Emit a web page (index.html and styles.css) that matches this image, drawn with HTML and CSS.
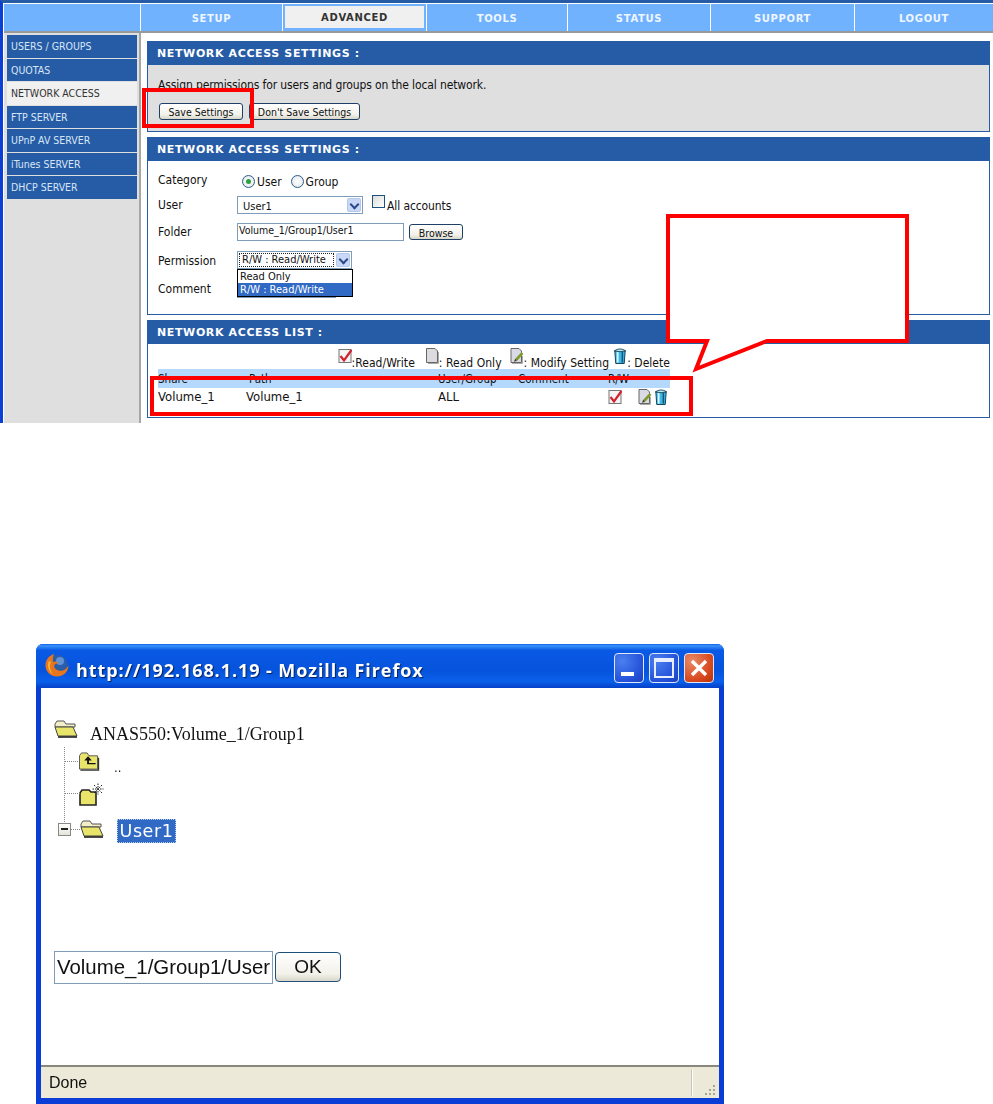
FILE: index.html
```html
<!DOCTYPE html>
<html lang="en">
<head>
<meta charset="utf-8">
<title>Network Access</title>
<link rel="stylesheet" href="styles.css">
</head>
<body>
<svg class="defs" width="0" height="0" aria-hidden="true">
  <symbol id="i-check" viewBox="0 0 14 15">
    <rect x="1" y="1" width="12" height="13" fill="#f4f4f4" stroke="#777"/>
    <path d="M2.5 7.5 L6 12 L13.5 1.5" fill="none" stroke="#d4202c" stroke-width="2.2"/>
  </symbol>
  <symbol id="i-doc" viewBox="0 0 14 16">
    <path d="M1.5 .5 H10 L12.5 3 V14.5 H1.5 Z" fill="#dcdce0" stroke="#666"/>
    <path d="M3 15.5 H13.5 V4" fill="none" stroke="#aaa"/>
  </symbol>
  <symbol id="i-edit" viewBox="0 0 14 16">
    <path d="M1 .5 H9 L11.5 3 V14.5 H1 Z" fill="#dadae6" stroke="#666"/>
    <path d="M2 15.5 H12.5 V8" fill="none" stroke="#aaa"/>
    <path d="M5.5 12.5 L12.5 5" stroke="#7f9a2c" stroke-width="2.6"/>
    <path d="M4.5 13.5 L6 11.5" stroke="#222" stroke-width="1.2"/>
  </symbol>
  <symbol id="i-trash" viewBox="0 0 14 17">
    <path d="M1.5 3 H12.5 L11.5 16.5 H2.5 Z" fill="#3fb6e6" stroke="#0e3a50"/>
    <path d="M4.5 4 V15.5" stroke="#d6f6ff" stroke-width="2"/>
    <path d="M9.5 4 V15.5" stroke="#0e5a7c" stroke-width="1.6"/>
    <path d="M1 3 Q7 -1 13 3 Q7 5 1 3 Z" fill="#b8e8f4" stroke="#0e3a50" stroke-width=".9"/>
  </symbol>
  <symbol id="i-folder" viewBox="0 0 24 18">
    <path d="M1 4 L3 1 H10 L12 4 H21 V7 H1 Z" fill="#f2efc8" stroke="#555"/>
    <path d="M1 7 H19 L23 16 H4 Z" fill="#e9e46a" stroke="#444"/>
    <path d="M4 17 H23" stroke="#222" stroke-width="1.6"/>
  </symbol>
</svg>

<section class="router">
  <nav class="tabs">
    <span class="tab"></span>
    <span class="tab">SETUP</span>
    <span class="tab tab-on"><b>ADVANCED</b></span>
    <span class="tab">TOOLS</span>
    <span class="tab">STATUS</span>
    <span class="tab">SUPPORT</span>
    <span class="tab">LOGOUT</span>
  </nav>
  <div class="layout">
    <aside class="side">
      <a class="side-item">USERS / GROUPS</a>
      <a class="side-item">QUOTAS</a>
      <a class="side-item side-on">NETWORK ACCESS</a>
      <a class="side-item">FTP SERVER</a>
      <a class="side-item">UPnP AV SERVER</a>
      <a class="side-item">iTunes SERVER</a>
      <a class="side-item">DHCP SERVER</a>
    </aside>
    <main class="main">
      <section class="panel">
        <h2 class="panel-head">NETWORK ACCESS SETTINGS :</h2>
        <div class="panel-body grey">
          <p class="intro">Assign permissions for users and groups on the local network.</p>
          <div class="btn-row">
            <span class="btn btn-save">Save Settings</span>
            <span class="btn btn-dont">Don't Save Settings</span>
          </div>
        </div>
      </section>
      <section class="panel">
        <h2 class="panel-head">NETWORK ACCESS SETTINGS :</h2>
        <div class="panel-body form">
          <span class="lbl lbl-cat">Category</span>
          <div class="ctl radios">
            <span class="radio radio-on"></span><span class="r-txt">User</span>
            <span class="radio radio-2"></span><span class="r-txt">Group</span>
          </div>
          <span class="lbl">User</span>
          <div class="ctl">
            <span class="select sel-user"><span class="sel-txt sel-low">User1</span><span class="arrow"></span></span>
            <span class="chk"></span><span class="chk-txt">All accounts</span>
          </div>
          <span class="lbl">Folder</span>
          <div class="ctl">
            <span class="input in-folder">Volume_1/Group1/User1</span>
            <span class="btn btn-browse">Browse</span>
          </div>
          <span class="lbl lbl-perm">Permission</span>
          <div class="ctl">
            <span class="select sel-perm"><span class="sel-txt sel-focus">R/W : Read/Write</span><span class="arrow"></span>
              <span class="drop"><span class="opt">Read Only</span><span class="opt opt-on">R/W : Read/Write</span></span>
            </span>
          </div>
          <span class="lbl">Comment</span>
          <div class="ctl"><span class="input in-comment"></span></div>
        </div>
      </section>
      <section class="panel">
        <h2 class="panel-head">NETWORK ACCESS LIST :</h2>
        <div class="panel-body list">
          <div class="legend">
            <svg class="ico"><use href="#i-check"/></svg><span class="leg-a">:Read/Write</span>
            <svg class="ico"><use href="#i-doc"/></svg><span class="leg-b">: Read Only</span>
            <svg class="ico"><use href="#i-edit"/></svg><span class="leg-c">: Modify Setting</span>
            <svg class="ico"><use href="#i-trash"/></svg><span>: Delete</span>
          </div>
          <div class="grid grid-head">
            <span>Share</span><span class="c-path">Path</span><span>User/Group</span><span>Comment</span><span>R/W</span>
          </div>
          <div class="grid grid-row">
            <span>Volume_1</span><span>Volume_1</span><span>ALL</span><span></span>
            <span class="row-icons">
              <svg class="ico"><use href="#i-check"/></svg>
              <svg class="ico ico-edit"><use href="#i-edit"/></svg>
              <svg class="ico ico-trash"><use href="#i-trash"/></svg>
            </span>
          </div>
        </div>
      </section>
    </main>
  </div>
  <svg class="marks" width="993" height="423" viewBox="0 0 993 423" aria-hidden="true">
    <rect x="144" y="90" width="108" height="36" fill="none" stroke="#fe0000" stroke-width="4"/>
    <rect x="152" y="378" width="539" height="36" fill="none" stroke="#fe0000" stroke-width="4"/>
    <path d="M668 216 H907 V341 H767 L696 369 L707 341 H668 Z" fill="#fff" stroke="#fe0000" stroke-width="4"/>
  </svg>
</section>

<section class="window">
  <header class="titlebar">
    <svg class="ff" viewBox="0 0 24 24" aria-hidden="true">
      <circle cx="12.5" cy="12" r="10" fill="#2c5da8"/>
      <circle cx="15" cy="8" r="4" fill="#5f93d6"/>
      <path d="M9 1 C4 2.5 .5 7 .5 12.5 C.5 19 6 23.5 12 23.5 C18 23.5 23.5 19 23.5 12 C21.5 17 17 18.5 13.5 17.5 C10 16.5 8.5 14 9.5 12 C10 10.5 12 10 14 11 C12 8 10 8 8 9 C7.5 6 8 4 9 1 Z" fill="#e8761c"/>
      <path d="M4 8 C2 12 3 18 8 21 C5 17 4 13 6 9 Z" fill="#f7b23c"/>
    </svg>
    <span class="title">http://192.168.1.19 - Mozilla Firefox</span>
    <span class="wbtns">
      <span class="wbtn wbtn-min"><span class="min-bar"></span></span>
      <span class="wbtn wbtn-max"><span class="max-box"></span></span>
      <span class="wbtn wbtn-close">
        <svg class="x" viewBox="0 0 20 20"><path d="M3 3 L17 17 M17 3 L3 17" stroke="#fff" stroke-width="3.4"/></svg>
      </span>
    </span>
  </header>
  <div class="client">
    <div class="tree">
      <div class="t-root">
        <svg class="fold"><use href="#i-folder"/></svg>
        <span class="root-txt">ANAS550:Volume_1/Group1</span>
      </div>
      <div class="t-line"></div>
      <div class="t-up">
        <span class="dash dash-1"></span>
        <svg class="fold fold-up" viewBox="0 0 22 20">
          <path d="M1 4 L3 1 H9 L11 4 H20 V18 H1 Z" fill="#e9e46a" stroke="#555"/>
          <path d="M2 19 H21 V6" fill="none" stroke="#333" stroke-width="1.4"/>
          <path d="M10 4.5 L6 9 H9 V13 H18 V11.5 H11 V9 H14 Z" fill="#111"/>
        </svg>
        <span class="dots">..</span>
      </div>
      <div class="t-new">
        <span class="dash dash-2"></span>
        <svg class="fold fold-new" viewBox="0 0 25 23">
          <path d="M1 10 L3 7 H10 L12 9 H17 V22 H1 Z" fill="#e9e46a" stroke="#222" stroke-width="1.6"/>
          <path d="M19 .5 V11.5 M13.5 6 H24.5 M15 2 L23 10 M23 2 L15 10" stroke="#222" stroke-dasharray="1.5 1"/>
        </svg>
      </div>
      <div class="t-user">
        <span class="minus"></span>
        <span class="dash dash-3"></span>
        <svg class="fold"><use href="#i-folder"/></svg>
        <span class="user-sel">User1</span>
      </div>
    </div>
    <div class="path-row">
      <span class="path-in">Volume_1/Group1/User</span>
      <span class="ok">OK</span>
    </div>
  </div>
  <footer class="status">
    <span class="done">Done</span>
    <span class="sep"></span>
    <svg class="grip" viewBox="0 0 12 12" aria-hidden="true">
      <path d="M9 1h2v2H9zM5 5h2v2H5zM9 5h2v2H9zM1 9h2v2H1zM5 9h2v2H5zM9 9h2v2H9z" fill="#a8a698"/>
    </svg>
  </footer>
</section>
</body>
</html>
```

FILE: styles.css
```css
* { box-sizing: border-box; }
html, body { margin: 0; padding: 0; background: #fff; }
body { width: 993px; height: 1104px; overflow: hidden; font-family: "DejaVu Sans Condensed", "DejaVu Sans", sans-serif; font-size: 12px; color: #111; }
.defs { position: absolute; }

.router { position: relative; height: 423px; overflow: hidden; border-top: 3px solid #265ca6; border-left: 3px solid #0b3fd6; padding-left: 1px; }
.tabs { display: grid; grid-template-columns: 137px 142px 144px 141px 143px 144px 1fr; height: 30px; border-bottom: 2px solid; border-image: linear-gradient(#fff 50%, #999 50%) 2; border-top: 1px solid #fff; background: #71b2ff; }
.tab { display: flex; align-items: center; justify-content: center; padding-top: 1px; border-right: 1px solid #fff; color: #eef6ff; font: bold 10px "DejaVu Sans", sans-serif; letter-spacing: .65px; }
.tab:last-child { border-right: 0; }
.tab-on { padding: 1px; }
.tab-on b { flex: 1; align-self: stretch; margin: 1px 1px 2px 1px; display: flex; align-items: center; justify-content: center; background: #f0f0f0; color: #333; }

.layout { display: flex; height: 390px; }
.side { width: 135px; background: #dfdfdf; padding: 2px 2px 0 3px; display: flex; flex-direction: column; gap: 1px; }
.side-item { height: 22.5px; background: #265ca6; color: #d8e6f6; font-size: 10.5px; padding-left: 4px; display: flex; align-items: center; }
.side-on { background: #f0f0f0; color: #333; }
.main { flex: 1; border-left: 2px solid #a6a6a6; padding: 8px 3px 0 6px; display: flex; flex-direction: column; gap: 5px; }

.panel { border: 1px solid #265ca6; border-top: 0; }
.panel-head { margin: 0 -1px; height: 24px; padding-left: 10px; background: #265ca6; color: #fff; font: bold 11px/25px "DejaVu Sans", sans-serif; letter-spacing: .63px; }
.panel-body { padding-left: 10px; }
.grey { background: #dfdfdf; height: 66px; padding-top: 12px; }
.intro { margin: 0; line-height: 16px; letter-spacing: -.12px; }
.btn-row { display: flex; gap: 6px; margin-top: 10px; padding-left: 1px; }
.btn { display: flex; align-items: center; justify-content: center; height: 17px; border: 1px solid #1e3f66; border-radius: 3px; background: linear-gradient(#fff, #f2f1ea 70%, #d8d6c8); font-size: 10.5px; padding-top: 1px; }
.btn-save { width: 84px; }
.btn-dont { width: 111px; }

.form { height: 153px; padding-top: 8px; display: grid; grid-template-columns: 79px 1fr; grid-template-rows: 23px 26px 28px 28px 30px; align-items: center; }
.lbl-cat { padding-bottom: 2px; }
.lbl-perm { padding-top: 2px; }
.ctl { display: flex; align-items: center; }
.radios { padding-left: 5px; padding-top: 2px; }
.radio { width: 13px; height: 13px; border: 1px solid #2c5d8a; border-radius: 50%; background: radial-gradient(#fff, #dfe3ea); display: flex; align-items: center; justify-content: center; }
.radio-on::after { content: ""; width: 5px; height: 5px; border-radius: 50%; background: #2fa13a; }
.radio-2 { margin-left: 9px; }
.r-txt { margin-left: 2px; }
.select { position: relative; display: flex; align-items: center; justify-content: space-between; height: 18px; background: #fff; border: 1px solid #7f9db9; padding: 1px; font-size: 11px; }
.sel-user { width: 126px; }
.sel-perm { width: 115px; }
.sel-txt { padding-left: 4px; }
.sel-low { padding-top: 2px; }
.sel-focus { padding: 0 2px; border: 1px dotted #222; line-height: 12px; height: 14px; flex: 1; margin-right: 2px; }
.arrow { width: 14px; height: 14px; border: 1px solid #b4c8ea; border-radius: 2px; background: #c9d8f6; display: flex; align-items: center; justify-content: center; flex: none; }
.arrow::after { content: ""; width: 5px; height: 5px; border: solid #2c4a8a; border-width: 0 2px 2px 0; transform: translateY(-1px) rotate(45deg); }
.chk { width: 13px; height: 13px; border: 1px solid #1c5180; background: linear-gradient(135deg, #dcdcd7, #fff); margin: -8px 0 0 9px; }
.chk-txt { margin-left: 2px; padding-top: 2px; letter-spacing: -.1px; }
.input { display: block; height: 18px; background: #fff; border: 1px solid #7f9db9; font-size: 10.5px; line-height: 13px; padding-left: 1px; }
.in-folder { width: 167px; }
.in-comment { width: 99px; }
.btn-browse { width: 54px; height: 16px; margin-left: 5px; font-size: 10.5px; }
.drop { position: absolute; left: -1px; top: 17px; width: 116px; height: 28px; background: #fff; border: 1px solid #000; display: flex; flex-direction: column; z-index: 2; }
.opt { height: 13px; line-height: 13px; padding-left: 2px; }
.opt-on { background: #316ac5; color: #fff; }

.list { height: 73px; }
.legend { width: 512px; height: 25px; display: flex; justify-content: flex-end; align-items: flex-end; }
.legend span { line-height: 15px; margin-bottom: -2px; letter-spacing: .04px; }
.ico { width: 14px; height: 16px; flex: none; margin-bottom: 5px; }
.leg-a { margin-right: 10px; }
.leg-b { margin-right: 8px; }
.leg-c { margin-right: 4px; }
.grid { width: 512px; display: grid; grid-template-columns: 88px 192px 80px 90px 62px; }
.grid-head { height: 19px; background: #b5d8fd; line-height: 20px; font-size: 11.5px; overflow: hidden; }
.c-path { padding-left: 3px; }
.grid-row { height: 24px; align-items: start; line-height: 18px; font-size: 13px; }
.row-icons { display: flex; align-items: center; padding-top: 1px; }
.row-icons .ico { margin-bottom: 0; }
.ico-edit { margin-left: 16px; }
.ico-trash { margin-left: 2px; }

.marks { position: absolute; left: -3px; top: -3px; }

.window { margin: 221px 0 0 36px; width: 688px; height: 460px; border-radius: 7px 7px 0 0; background: #0a3dd6; display: flex; flex-direction: column; filter: blur(.4px); }
.titlebar { height: 44px; flex: none; padding: 0 10px 0 9px; border-radius: 7px 7px 0 0; background: linear-gradient(#0a5fe8 0, #3a92f8 4%, #0a5ae6 14%, #0653dc 60%, #0a60ea 85%, #0440c8 100%); display: flex; align-items: center; }
.ff { width: 24px; height: 24px; flex: none; margin-top: -3px; }
.title { margin: 8px 0 0 7px; color: #fff; font: bold 18px "Open Sans", "DejaVu Sans", sans-serif; letter-spacing: .92px; text-shadow: 1px 1px 1px #02205e; white-space: nowrap; }
.wbtns { margin-left: auto; display: flex; gap: 5px; margin-top: 3px; }
.wbtn { width: 30px; height: 30px; border: 1px solid #dfe8fb; border-radius: 4px; background: radial-gradient(circle at 25% 25%, #4a7ff0, #2450d8 70%, #1c3fb8); position: relative; display: flex; align-items: center; justify-content: center; }
.wbtn-close { background: radial-gradient(circle at 25% 25%, #e88a66, #d8481e 65%, #b83208); }
.min-bar { position: absolute; left: 6px; bottom: 6px; width: 13px; height: 4px; background: #fff; }
.max-box { width: 20px; height: 20px; border: 2px solid #e8eefc; border-top-width: 4px; }
.x { width: 20px; height: 20px; }

.client { flex: 1; margin: 0 5px; background: #fff; position: relative; display: flex; flex-direction: column; }
.tree { padding: 32px 0 0 13px; height: 263px; }
.t-root { display: flex; align-items: center; height: 18px; }
.fold { width: 24px; height: 18px; flex: none; display: block; }
.root-txt { margin-left: 12px; font: 18px/18px "Liberation Serif", serif; white-space: nowrap; transform: translateY(5px); }
.t-line { position: absolute; left: 23px; top: 59px; height: 75px; border-left: 1px dotted #888; }
.t-up, .t-new, .t-user { position: relative; display: flex; align-items: center; }
.t-up { margin: 14px 0 0 24px; height: 19px; }
.fold-up { width: 22px; height: 19px; }
.dash { position: absolute; height: 0; border-top: 1px dotted #888; }
.dash-1 { left: -14px; width: 14px; top: 9px; }
.dash-2 { left: -14px; width: 15px; top: 10px; }
.dash-3 { left: 13px; width: 9px; top: 9px; }
.dots { margin: 12px 0 0 14px; font-size: 13px; }
.t-new { margin: 12px 0 0 25px; height: 23px; }
.fold-new { width: 25px; height: 23px; }
.t-user { margin: 14px 0 0 4px; height: 18px; }
.minus { width: 13px; height: 13px; border: 1px solid #888; background: linear-gradient(#fff, #e4e4dc); display: flex; align-items: center; justify-content: center; }
.minus::after { content: ""; width: 7px; height: 2px; background: #222; }
.t-user .fold { margin-left: 9px; }
.user-sel { margin: 4px 0 0 13px; width: 59px; height: 24px; flex: none; background: #316ac5; color: #fff; font: 17.5px/22px "DejaVu Sans", sans-serif; letter-spacing: .6px; text-align: center; border: 1px dotted #b7cbea; white-space: nowrap; }
.path-row { display: flex; align-items: flex-start; padding-left: 13px; }
.path-in { width: 219px; height: 33px; border: 1px solid #7f9db9; font: 20.4px/30px "Liberation Sans", sans-serif; padding-left: 2px; white-space: nowrap; }
.ok { width: 66px; height: 30px; margin: 1px 0 0 2px; border: 1px solid #1e4f7a; border-radius: 4px; background: linear-gradient(#fff, #f2f1ea 75%, #d8d6c8); display: flex; align-items: center; justify-content: center; font: 19px "Liberation Sans", sans-serif; }
.status { height: 39px; flex: none; margin: 0 5px; background: #ece9d8; border-top: 2px solid #8a887c; position: relative; padding-left: 8px; border-bottom: 6px solid #0a3dd6; display: flex; align-items: center; }
.done { font: 16px "Liberation Sans", sans-serif; }
.sep { position: absolute; left: 650px; top: 2px; bottom: 2px; border-left: 1px solid #c8c5b2; border-right: 1px solid #fff; }
.grip { position: absolute; right: 3px; bottom: 2px; width: 12px; height: 12px; }
```
